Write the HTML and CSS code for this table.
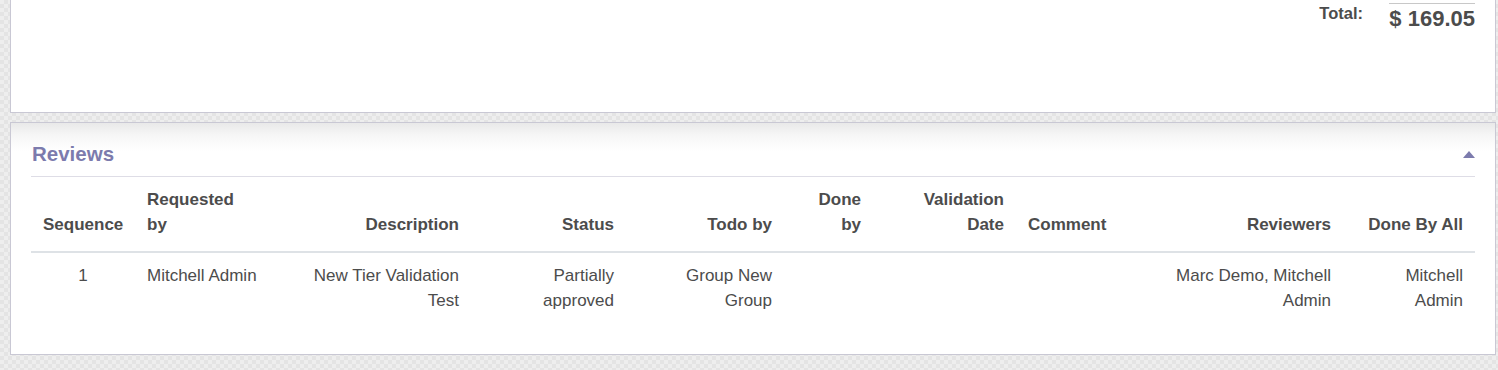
FILE: index.html
```html
<!DOCTYPE html>
<html lang="en">
<head>
<meta charset="utf-8">
<title>Reviews</title>
<link rel="stylesheet" href="styles.css">
</head>
<body>
<div class="page">
  <div class="sheet sheet-top">
    <div class="totals">
      <div class="total-label">Total:</div>
      <div class="total-amount">$ 169.05</div>
    </div>
  </div>
  <div class="sheet sheet-reviews">
    <div class="separator">
      <span class="separator-title">Reviews</span>
      <span class="caret-up"></span>
    </div>
    <table class="review-table">
      <colgroup>
        <col class="c-seq">
        <col class="c-req">
        <col class="c-desc">
        <col class="c-status">
        <col class="c-todo">
        <col class="c-done">
        <col class="c-date">
        <col class="c-comment">
        <col class="c-reviewers">
        <col class="c-all">
      </colgroup>
      <thead>
        <tr>
          <th class="center">Sequence</th>
          <th class="left">Requested<br>by</th>
          <th class="right">Description</th>
          <th class="right">Status</th>
          <th class="right">Todo by</th>
          <th class="right">Done<br>by</th>
          <th class="right">Validation<br>Date</th>
          <th class="left">Comment</th>
          <th class="right">Reviewers</th>
          <th class="right">Done By All</th>
        </tr>
      </thead>
      <tbody>
        <tr>
          <td class="center">1</td>
          <td class="left">Mitchell Admin</td>
          <td class="right">New Tier Validation<br>Test</td>
          <td class="right">Partially<br>approved</td>
          <td class="right">Group New<br>Group</td>
          <td class="right"></td>
          <td class="right"></td>
          <td class="left"></td>
          <td class="right">Marc Demo, Mitchell<br>Admin</td>
          <td class="right">Mitchell<br>Admin</td>
        </tr>
      </tbody>
    </table>
  </div>
</div>
</body>
</html>
```

FILE: styles.css
```css
* {
  box-sizing: border-box;
}

html, body {
  margin: 0;
  padding: 0;
}

body {
  font-family: "Liberation Sans", Arial, Helvetica, sans-serif;
  font-size: 17px;
  line-height: 25px;
  color: #4c4c4c;
  background-color: #e9e9e9;
  background-image: repeating-conic-gradient(#e4e4e4 0 25%, #eeeeee 0 50%);
  background-size: 8px 8px;
  height: 370px;
  overflow: hidden;
}

.page {
  display: flex;
  flex-direction: column;
  gap: 9px;
  padding-left: 10px;
}

.sheet {
  width: 1486px;
  background: #ffffff;
  border: 1px solid #c9c8d4;
  padding: 0 20px;
}

.sheet-top {
  border-top: none;
  height: 113px;
  display: flex;
  justify-content: flex-end;
  align-items: flex-start;
}

.totals {
  display: flex;
  align-items: flex-start;
}

.total-label {
  font-size: 16.5px;
  font-weight: 700;
  margin-top: 1px;
  padding-right: 26px;
  line-height: 25px;
}

.total-amount {
  margin-top: 3px;
  width: 86px;
  border-top: 1px solid #c8c8c8;
  font-size: 22px;
  font-weight: 700;
  line-height: 30px;
  text-align: right;
  white-space: nowrap;
}

.sheet-reviews {
  background: linear-gradient(to bottom, #e9e9e9 0, #f6f6f6 12px, #ffffff 28px);
  padding-top: 16px;
  padding-bottom: 27px;
}

.separator {
  display: flex;
  justify-content: space-between;
  align-items: center;
  padding-bottom: 7px;
  border-bottom: 1px solid #dedde6;
}

.separator-title {
  font-size: 20.5px;
  font-weight: 700;
  line-height: 30px;
  color: #7c7bad;
  padding-left: 1px;
}

.caret-up {
  width: 0;
  height: 0;
  border-left: 6px solid transparent;
  border-right: 6px solid transparent;
  border-bottom: 7px solid #7c7bad;
  margin-top: 1px;
}

.review-table {
  width: 1444px;
  table-layout: fixed;
  border-collapse: collapse;
  border-spacing: 0;
}

.c-seq { width: 104px; }
.c-req { width: 135px; }
.c-desc { width: 201px; }
.c-status { width: 155px; }
.c-todo { width: 158px; }
.c-done { width: 89px; }
.c-date { width: 143px; }
.c-comment { width: 144px; }
.c-reviewers { width: 183px; }
.c-all { width: 132px; }

.review-table th,
.review-table td {
  padding: 10px 12px 14px;
  white-space: nowrap;
  line-height: 25px;
}

.review-table th {
  font-weight: 700;
  vertical-align: bottom;
  border-bottom: 2px solid #dee2e6;
}

.review-table td {
  font-weight: 400;
  vertical-align: top;
}

.center { text-align: center; }
.left { text-align: left; }
.right { text-align: right; }
```
